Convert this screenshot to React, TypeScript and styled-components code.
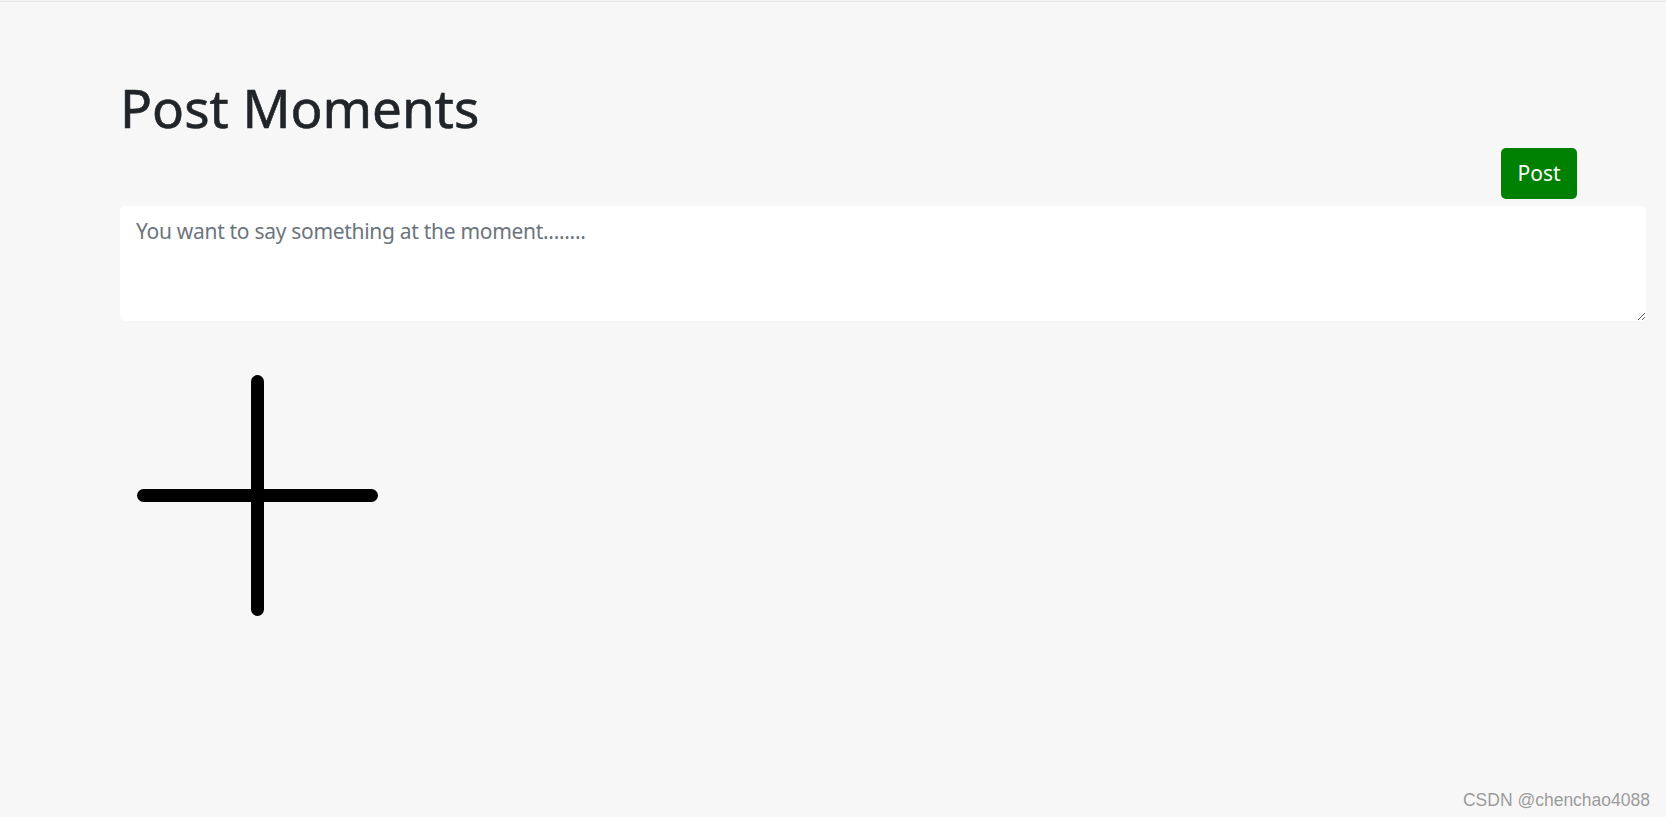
import React from "react";
import styled, { createGlobalStyle } from "styled-components";

const GlobalStyle = createGlobalStyle`
  html, body {
    margin: 0;
    padding: 0;
    background: #f7f7f7;
  }
  body {
    font-family: "Noto Sans", "Open Sans", sans-serif;
    color: #212529;
  }
`;

const Page = styled.div`
  position: relative;
  min-height: 817px;
  box-sizing: border-box;
  border-top: 1px solid #f2f2f2;
`;

const TopRule = styled.div`
  height: 1px;
  background: #e6e6e6;
`;

const Container = styled.div`
  padding: 0 20px 0 120px;
  display: flex;
  flex-direction: column;
`;

const Title = styled.h1`
  margin: 74px 0 0 0;
  font-size: 53px;
  font-weight: 400;
  line-height: 1.2;
  color: #212529;
  -webkit-text-stroke: 0.6px #212529;
`;

const ButtonRow = styled.div`
  display: flex;
  justify-content: flex-end;
  margin-top: 8px;
  padding-right: 69px;
`;

const PostButton = styled.button`
  width: 76px;
  height: 51px;
  border: none;
  border-radius: 5px;
  background: #008000;
  color: #fff;
  font-family: "Noto Sans", "Open Sans", sans-serif;
  font-size: 21px;
  cursor: pointer;
  padding: 0;
`;

const MomentInput = styled.textarea`
  margin-top: 7px;
  box-sizing: border-box;
  width: 100%;
  height: 115px;
  border: none;
  border-radius: 5px;
  background: #fff;
  padding: 10px 16px;
  font-family: "Noto Sans", "Open Sans", sans-serif;
  font-size: 21px;
  letter-spacing: -0.3px;
  line-height: 1.5;
  color: #212529;
  resize: vertical;
  outline: none;
  &::placeholder {
    color: #6c757d;
  }
`;

const AddImage = styled.button`
  margin: 47px 0 0 10px;
  width: 256px;
  height: 256px;
  padding: 0;
  border: none;
  background: transparent;
  cursor: pointer;
  align-self: flex-start;
  svg {
    display: block;
  }
`;

const Watermark = styled.div`
  position: absolute;
  right: 16px;
  bottom: 6px;
  font-family: "Liberation Sans", Arial, sans-serif;
  font-size: 17.5px;
  color: #9a9a9a;
  text-shadow: 0 0 1px #fff;
`;

const PlusIcon: React.FC = () => (
  <svg width="256" height="256" viewBox="0 0 256 256">
    <g stroke="#000" strokeWidth="13" strokeLinecap="round">
      <line x1="127.5" y1="13.5" x2="127.5" y2="241.5" />
      <line x1="13.5" y1="127.5" x2="241.5" y2="127.5" />
    </g>
  </svg>
);

const App: React.FC = () => {
  return (
    <>
      <GlobalStyle />
      <Page>
        <TopRule />
        <Container>
          <Title>Post Moments</Title>
          <ButtonRow>
            <PostButton>Post</PostButton>
          </ButtonRow>
          <MomentInput placeholder="You want to say something at the moment........" />
          <AddImage aria-label="add picture">
            <PlusIcon />
          </AddImage>
        </Container>
        <Watermark>CSDN @chenchao4088</Watermark>
      </Page>
    </>
  );
};

export default App;
